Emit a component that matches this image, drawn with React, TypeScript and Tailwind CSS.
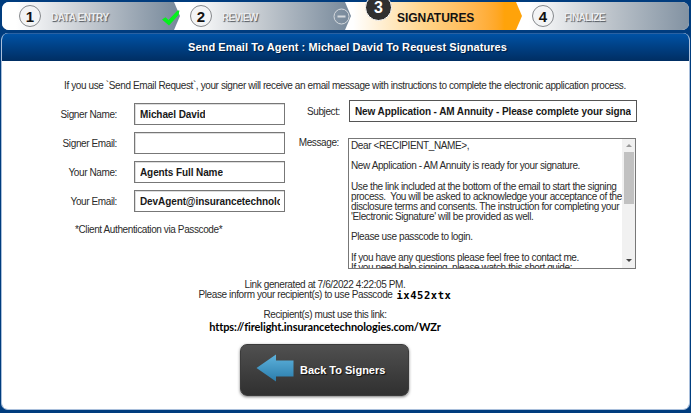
import React from "react";

function StepNumber({ n }: { n: number }) {
  return (
    <span className="flex size-[22px] shrink-0 items-center justify-center rounded-full border-[1.5px] border-[#85888c] bg-[#f3f4f5] text-[15px] font-bold leading-none text-[#111]">
      {n}
    </span>
  );
}

const stepLabel =
  "whitespace-nowrap text-[10px] font-bold text-[#eceef0] [text-shadow:1px_1px_1px_#4f555c]";

function Steps() {
  return (
    <div className="relative mx-[2px] flex h-[28px] overflow-hidden rounded-[7px] bg-white">
      <div className="relative z-40 flex w-[178px] shrink-0 items-center bg-linear-to-r from-white from-8% via-[#c9ced4] via-45% to-[#76889a] pl-[17px] [clip-path:polygon(0_0,172px_0,178px_50%,172px_100%,0_100%)]">
        <StepNumber n={1} />
        <span className={`${stepLabel} ml-[10px] mt-[2px] tracking-[-0.45px]`}>DATA ENTRY</span>
      </div>
      <div className="relative z-30 -ml-[7px] flex w-[178px] shrink-0 items-center bg-linear-to-r from-white from-10% via-[#c3c9cf] via-50% to-[#76889a] pl-[17px] [clip-path:polygon(0_0,172px_0,178px_50%,172px_100%,0_100%)]">
        <StepNumber n={2} />
        <span className={`${stepLabel} ml-[10px] mt-[2px] tracking-[-0.65px]`}>REVIEW</span>
        <svg className="absolute left-[160px] top-[6px]" width="17" height="17" viewBox="0 0 17 17" fill="none" stroke="#d5d9dd">
          <circle cx="8.5" cy="8.5" r="7.5" />
          <path d="M4.5 8.5h8" strokeWidth="2" />
        </svg>
      </div>
      <div className="relative z-20 -ml-[7px] flex w-[178px] shrink-0 items-center bg-linear-to-r from-white from-5% via-[#ffd58a] via-45% to-[#ffa30a] to-90% pl-[53px] [clip-path:polygon(0_0,172px_0,178px_50%,172px_100%,0_100%)]">
        <span className="mt-[3px] whitespace-nowrap text-[12px] font-bold tracking-[-0.05px] text-[#111]">SIGNATURES</span>
      </div>
      <div className="-ml-[7px] flex grow items-center bg-linear-to-r from-white from-8% via-[#c3c9cf] via-50% to-[#8292a2] pl-[17px]">
        <StepNumber n={4} />
        <span className={`${stepLabel} ml-[10px] mt-[2px] tracking-[-0.5px]`}>FINALIZE</span>
      </div>
      <svg className="absolute left-[160px] top-[7px] z-50" width="18" height="17" viewBox="0 0 18 17">
        <path d="M0 10.500 3.500 8.200 6.500 11 15.500 1.500H17.500L16.500 6 7 16.500Z" fill="#05f01d" />
      </svg>
    </div>
  );
}

const small = "whitespace-nowrap text-[10px] tracking-[-0.39px]";

function Field({ label, value }: { label: string; value: string }) {
  return (
    <div className="flex h-[22px] items-center">
      <span className={`${small} w-[115px] text-right`}>{label}</span>
      <div className="ml-[17px] flex h-[22px] w-[151px] items-center border border-[#777] pl-[5px] pr-[4px] shadow-[inset_1px_1px_0_#ddd]">
        <span className="overflow-hidden whitespace-nowrap text-[10px] font-bold tracking-[-0.1px] text-[#181818]">{value}</span>
      </div>
    </div>
  );
}

const message = [
  "Dear <RECIPIENT_NAME>,",
  "",
  "New Application - AM Annuity is ready for your signature.",
  "",
  "Use the link included at the bottom of the email to start the signing",
  "process.  You will be asked to acknowledge your acceptance of the",
  "disclosure terms and consents. The instruction for completing your",
  "'Electronic Signature' will be provided as well.",
  "",
  "Please use passcode to login.",
  "",
  "If you have any questions please feel free to contact me.",
  "If you need help signing, please watch this short guide:",
];

export default function App() {
  return (
    <div className="relative h-[413px] w-[691px] overflow-hidden bg-[#003c7e] pt-[2px] font-['Liberation_Sans',Arial,sans-serif] text-[#2b2b2b]">
      <Steps />
      <div className="absolute left-[365px] top-[-6px] z-50 flex size-[27px] items-center justify-center rounded-full border border-white bg-[#303030] text-[16px] font-bold text-white">
        3
      </div>
      <div className="mx-[1px] mt-[3px] flex h-[377px] flex-col overflow-hidden rounded-[7px] border border-t-0 border-[#a9bfdb] bg-white">
        <div className="flex h-[28px] shrink-0 items-center justify-center border-t border-[#2a62a3] bg-linear-to-b from-[#0052a5] to-[#002e63]">
          <span className="ml-[4px] whitespace-nowrap text-[11px] font-bold tracking-[0.09px] text-white [text-shadow:1px_1px_1px_#001a3a]">
            Send Email To Agent : Michael David To Request Signatures
          </span>
        </div>
        <p className={`${small} ml-[62px] mt-[19px] h-[12px] leading-[12px]`}>
          If you use `Send Email Request`, your signer will receive an email message with instructions to complete the electronic application process.
        </p>
        <div className="flex h-[179px]">
          <div className="flex w-[283px] flex-col gap-[7px] pt-[11px]">
            <Field label="Signer Name:" value="Michael David" />
            <Field label="Signer Email:" value="" />
            <Field label="Your Name:" value="Agents Full Name" />
            <Field label="Your Email:" value="DevAgent@insurancetechnologies.com" />
            <span className={`${small} ml-[73px] mt-[5px] leading-[12px]`}>*Client Authentication via Passcode*</span>
          </div>
          <div className="ml-[16px] pt-[8px]">
            <div className="flex items-center">
              <span className={`${small} w-[39px] text-right`}>Subject:</span>
              <div className="ml-[9px] flex h-[22px] w-[288px] items-center border border-[#555] pl-[5px] pr-[4px]">
                <span className="overflow-hidden whitespace-nowrap text-[10px] font-bold tracking-[-0.1px] text-[#181818]">
                  New Application - AM Annuity - Please complete your signa
                </span>
              </div>
            </div>
            <div className="mt-[16px] flex">
              <span className={`${small} flex w-[38px] justify-end leading-[10px]`}>
                Message:
              </span>
              <div className="ml-[9px] flex h-[131px] w-[288px] overflow-hidden border border-[#777]">
                <div className="grow overflow-hidden pl-[2px] pt-[2px] text-[10px] leading-[10.15px] tracking-[-0.39px]">
                  {message.map((line, i) => (
                    <div key={i} className="h-[10.15px] whitespace-pre">{line}</div>
                  ))}
                </div>
                <div className="flex w-[13px] shrink-0 flex-col items-center bg-[#f1f1f1]">
                  <svg className="mt-[5px] shrink-0" width="6" height="3" viewBox="0 0 6 3"><path d="M0 3 3 0 6 3Z" fill="#999" /></svg>
                  <div className="mt-[5px] h-[52px] w-[10px] bg-[#c1c1c1]" />
                  <svg className="mb-[6px] mt-auto shrink-0" width="6" height="3" viewBox="0 0 6 3"><path d="M0 0 3 3 6 0Z" fill="#444" /></svg>
                </div>
              </div>
            </div>
          </div>
        </div>
        <div className={`${small} ml-[195px] mt-[9px] flex w-[256px] flex-col items-center leading-[10px]`}>
          <div>Link generated at 7/6/2022 4:22:05 PM.</div>
          <div className="flex">
            Please inform your recipient(s) to use Passcode
            <b className="ml-[4px] font-['DejaVu_Sans_Mono',monospace] text-[10.5px] tracking-[0.55px] text-black">ix452xtx</b>
          </div>
          <div className="mt-[10px]">Recipient(s) must use this link:</div>
          <div className="font-['Lato',sans-serif] text-[11px] font-bold leading-[14px] tracking-[-0.1px] text-black">
            https://firelight.insurancetechnologies.com/WZr
          </div>
        </div>
        <div className="ml-[238px] mt-[10px] flex h-[52px] w-[169px] shrink-0 items-center rounded-[7px] border border-[#3b3b3b] bg-linear-to-b from-[#505050] to-[#303030] shadow-[0_1px_3px_#777]">
          <svg className="-mt-[4px] ml-[15px]" width="38" height="28" viewBox="0 0 38 28">
            <defs>
              <linearGradient id="arrow" x1="0" y1="0" x2="0" y2="1">
                <stop offset="0" stopColor="#5eb2dc" />
                <stop offset="1" stopColor="#2a7cab" />
              </linearGradient>
            </defs>
            <path d="M.5 14 20 .5V6.500H37.500V22.500H20V27.500Z" fill="url(#arrow)" />
          </svg>
          <span className="ml-[6px] whitespace-nowrap text-[11px] font-bold text-white [text-shadow:1px_1px_1px_#111]">Back To Signers</span>
        </div>
      </div>
    </div>
  );
}
